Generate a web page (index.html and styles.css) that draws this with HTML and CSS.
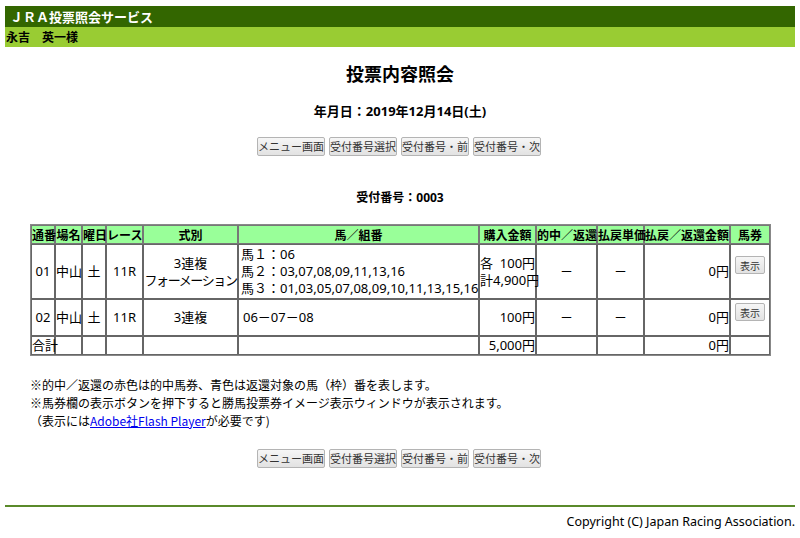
FILE: index.html
```html
<!DOCTYPE html>
<html lang="ja">
<head>
<meta charset="utf-8">
<title>投票内容照会</title>
<link rel="stylesheet" href="styles.css">
</head>
<body>
<div class="page">
  <div class="brand">ＪＲＡ投票照会サービス</div>
  <div class="user">永吉　英一様</div>
  <h1 class="title">投票内容照会</h1>
  <p class="date">年月日：2019年12月14日(土)</p>
  <div class="btns">
    <button class="btn">メニュー画面</button>
    <button class="btn">受付番号選択</button>
    <button class="btn">受付番号・前</button>
    <button class="btn">受付番号・次</button>
  </div>
  <p class="recno">受付番号：0003</p>
  <table class="tbl">
    <colgroup>
      <col style="width:24px"><col style="width:27px"><col style="width:24px"><col style="width:37px"><col style="width:95px"><col style="width:241px"><col style="width:57px"><col style="width:61px"><col style="width:47px"><col style="width:86px"><col style="width:40px">
    </colgroup>
    <tr class="head">
      <th>通番</th><th>場名</th><th>曜日</th><th>レース</th><th>式別</th><th>馬／組番</th><th>購入金額</th><th>的中／返還</th><th>払戻単価</th><th>払戻／返還金額</th><th>馬券</th>
    </tr>
    <tr class="r1">
      <td class="c">01</td><td>中山</td><td class="c">土</td><td class="c">11R</td>
      <td class="c">3連複<br><span class="narrow">フォーメーション</span></td>
      <td class="pad1">馬１：06<br>馬２：03,07,08,09,11,13,16<br>馬３：01,03,05,07,08,09,10,11,13,15,16</td>
      <td class="r">各&nbsp;&nbsp;100円<br>計4,900円</td>
      <td class="c">－</td><td class="c">－</td><td class="r">0円</td>
      <td class="t"><button class="show show1">表示</button></td>
    </tr>
    <tr class="r2">
      <td class="c">02</td><td>中山</td><td class="c">土</td><td class="c">11R</td>
      <td class="c">3連複</td>
      <td class="pad">06－07－08</td>
      <td class="r">100円</td>
      <td class="c">－</td><td class="c">－</td><td class="r">0円</td>
      <td class="t"><button class="show">表示</button></td>
    </tr>
    <tr class="r3">
      <td>合計</td><td></td><td></td><td></td><td></td><td></td>
      <td class="r">5,000円</td><td></td><td></td><td class="r">0円</td><td></td>
    </tr>
  </table>
  <div class="notes">
    <p>※的中／返還の赤色は的中馬券、青色は返還対象の馬（枠）番を表します。</p>
    <p>※馬券欄の表示ボタンを押下すると勝馬投票券イメージ表示ウィンドウが表示されます。</p>
    <p>（表示には<a href="#">Adobe社Flash Player</a>が必要です)</p>
  </div>
  <div class="btns btns2">
    <button class="btn">メニュー画面</button>
    <button class="btn">受付番号選択</button>
    <button class="btn">受付番号・前</button>
    <button class="btn">受付番号・次</button>
  </div>
  <div class="foot">Copyright (C) Japan Racing Association.</div>
</div>
</body>
</html>
```

FILE: styles.css
```css
* { box-sizing: border-box; }
html, body { margin: 0; padding: 0; background: #fff; }
body {
  font-family: "Noto Sans", "Noto Sans CJK JP", sans-serif;
  font-size: 12px;
  color: #000;
}
.page {
  width: 790px;
  margin: 0 0 0 5px;
  padding-top: 6px;
}
.brand {
  background: #336600;
  color: #fff;
  font-weight: bold;
  font-size: 13px;
  height: 21px;
  line-height: 21px;
  padding-left: 5px;
  font-family: "Noto Sans CJK JP", sans-serif;
}
.user {
  background: #99cc33;
  height: 20px;
  line-height: 20px;
  font-weight: bold;
  font-size: 12px;
  padding-left: 1px;
  font-family: "Noto Sans CJK JP", sans-serif;
}
.title {
  margin: 14px 0 0;
  text-align: center;
  font-size: 18px;
  line-height: 24px;
  font-family: "Noto Sans CJK JP", sans-serif;
}
.date {
  margin: 17px 0 0;
  text-align: center;
  font-weight: bold;
  font-size: 13px;
  line-height: 18px;
}
.btns {
  display: flex;
  justify-content: center;
  gap: 4px;
  margin-top: 17px;
  padding-right: 2px;
}
.btn, .show {
  font-family: "Noto Sans CJK JP", sans-serif;
  font-size: 11px;
  height: 19px;
  line-height: 15px;
  padding: 0 5px;
  background: linear-gradient(#f6f6f6, #e2e2e2);
  border: 1px solid #b4b4b4;
  border-radius: 2px;
  color: #333;
  margin: 0;
}
.btn { width: 68px; padding: 0; }
.recno {
  margin: 33px 0 0;
  text-align: center;
  font-weight: bold;
  font-size: 12px;
  line-height: 18px;
}
.tbl {
  margin: 17px 0 0 25px;
  border-collapse: separate;
  border-spacing: 0;
  border: 1px solid #888;
  width: 740px;
  table-layout: fixed;
  font-size: 13px;
}
.tbl th, .tbl td {
  border: 1px solid #666;
  padding: 0;
  line-height: 17px;
  white-space: nowrap;
  overflow: visible;
}
.tbl th {
  background: #99ff99;
  font-weight: bold;
  font-size: 12px;
  height: 18px;
  text-align: center;
  font-family: "Noto Sans CJK JP", sans-serif;
  border-color: #777;
}
.tbl td { vertical-align: middle; }
.tbl .r1 td { height: 55px; }
.tbl .r2 td { height: 37px; }
.tbl .r3 td { height: 19px; }
.tbl .c { text-align: center; }
.tbl .r { text-align: right; }
.tbl .pad { padding-left: 4px; }
.tbl .pad1 { padding-left: 2px; }
.tbl .t { vertical-align: top; text-align: center; }
.narrow { letter-spacing: -1.4px; }
.show { height: 18px; font-size: 10px; padding: 0 4px; margin-top: 3px; }
.show1 { margin-top: 11px; }
.notes {
  margin: 20px 0 0 25px;
  font-size: 12px;
}
.notes p { margin: 0; line-height: 18px; font-family: "Noto Sans CJK JP", sans-serif; }
.notes a { color: #0000ee; }
.btns2 { margin-top: 19px; }
.foot {
  margin-top: 37px;
  border-top: 2px solid #5a8a2a;
  text-align: right;
  font-family: "Noto Sans", sans-serif;
  font-size: 12.5px;
  padding-top: 6px;
  line-height: 17px;
}
```
